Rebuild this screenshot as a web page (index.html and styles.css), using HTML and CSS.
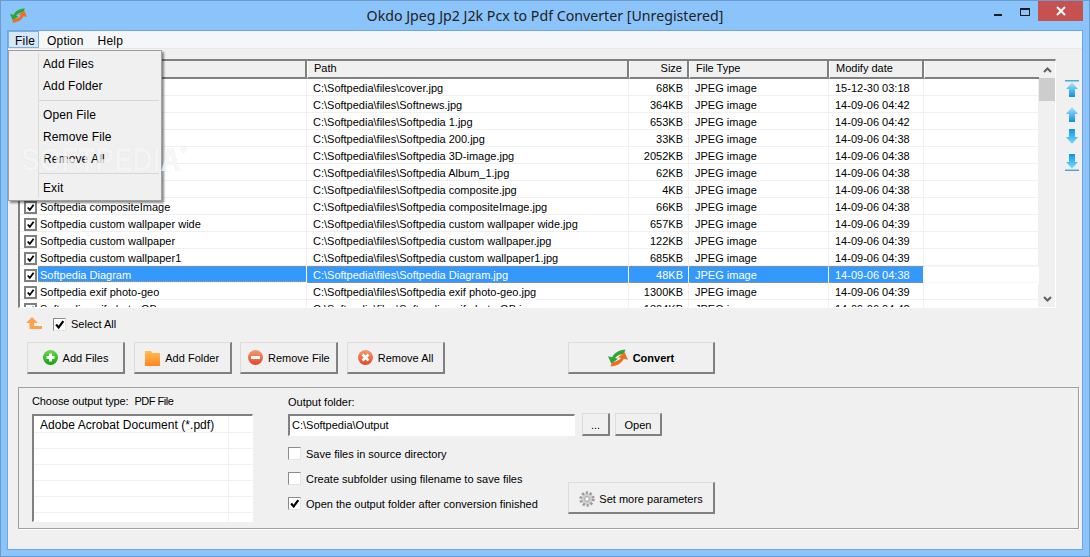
FILE: index.html
```html
<!DOCTYPE html>
<html lang="en">
<head>
    <meta charset="UTF-8">
    <title>Okdo Jpeg Jp2 J2k Pcx to Pdf Converter</title>
    <link rel="stylesheet" href="styles.css">
</head>
<body>
    <svg class="icon-defs" aria-hidden="true">
        <defs>
            <linearGradient id="blueUp" x1="0" y1="0" x2="0" y2="1">
                <stop offset="0" stop-color="#a5e6fb"/>
                <stop offset="1" stop-color="#0a8fe6"/>
            </linearGradient>
            <linearGradient id="blueDown" x1="0" y1="0" x2="0" y2="1">
                <stop offset="0" stop-color="#0a95e8"/>
                <stop offset="1" stop-color="#7adcfb"/>
            </linearGradient>
            <linearGradient id="greenBall" x1="0" y1="0" x2="0" y2="1">
                <stop offset="0" stop-color="#6fd84a"/>
                <stop offset="1" stop-color="#12a012"/>
            </linearGradient>
            <linearGradient id="redBall" x1="0" y1="0" x2="0" y2="1">
                <stop offset="0" stop-color="#f79a6c"/>
                <stop offset="1" stop-color="#e2472a"/>
            </linearGradient>
            <linearGradient id="folderFill" x1="0" y1="0" x2="0" y2="1">
                <stop offset="0" stop-color="#ffc04d"/>
                <stop offset="1" stop-color="#ff8426"/>
            </linearGradient>
        </defs>
        <symbol id="tick" viewBox="0 0 13 13">
            <path d="M2.5 6.5 L5.5 10 L11 2.5" fill="none" stroke="#000" stroke-width="2.6"/>
        </symbol>
        <symbol id="swap" viewBox="0 0 24 24">
            <path d="M21 2 C14 2 8 5 5 11 L0 10 L4 19 L12 13 L8.5 12 C11 9 15 7.5 19 7 Z" fill="#2aa836"/>
            <path d="M3 22 C10 22 16 19 19 13 L24 14 L20 5 L12 11 L15.5 12 C13 15 9 16.5 5 17 Z" fill="#ef6f22"/>
        </symbol>
        <symbol id="arrowTop" viewBox="0 0 16 17">
            <rect x="1" y="0" width="14" height="1.5" fill="#45a9dc"/>
            <path d="M8 2.5 L14 9 L11 9 L11 17 L5 17 L5 9 L2 9 Z" fill="url(#blueUp)"/>
        </symbol>
        <symbol id="arrowUp" viewBox="0 0 16 15">
            <path d="M8 0 L14 7 L11 7 L11 15 L5 15 L5 7 L2 7 Z" fill="url(#blueUp)"/>
        </symbol>
        <symbol id="arrowDown" viewBox="0 0 16 15">
            <path d="M5 0 L11 0 L11 8 L14 8 L8 15 L2 8 L5 8 Z" fill="url(#blueDown)"/>
        </symbol>
        <symbol id="arrowBottom" viewBox="0 0 16 17">
            <path d="M5 0 L11 0 L11 8 L14 8 L8 14.5 L2 8 L5 8 Z" fill="url(#blueDown)"/>
            <rect x="1" y="15.5" width="14" height="1.5" fill="#45a9dc"/>
        </symbol>
    </svg>

    <div class="window">
        <div class="titlebar">
            <div class="app-icon"><svg width="17" height="17"><use href="#swap"/></svg></div>
            <div class="title">Okdo Jpeg Jp2 J2k Pcx to Pdf Converter [Unregistered]</div>
            <div class="window-buttons">
                <span class="btn-min"></span>
                <span class="btn-max"></span>
                <span class="btn-close">
                    <svg width="10" height="10" viewBox="0 0 10 10"><path d="M1 1 L9 9 M9 1 L1 9" stroke="#fff" stroke-width="2"/></svg>
                </span>
            </div>
        </div>

        <div class="client">
            <div class="menubar">
                <span class="menu-title active">File</span>
                <span class="menu-title">Option</span>
                <span class="menu-title">Help</span>
            </div>

            <div class="list-row">
                <div class="file-list">
                    <div class="file-table-wrap">
                        <table class="file-table">
                            <colgroup>
                                <col class="col-name">
                                <col class="col-path">
                                <col class="col-size">
                                <col class="col-type">
                                <col class="col-date">
                                <col>
                            </colgroup>
                            <thead>
                                <tr>
                                    <th>Name</th>
                                    <th>Path</th>
                                    <th class="right">Size</th>
                                    <th>File Type</th>
                                    <th>Modify date</th>
                                    <th></th>
                                </tr>
                            </thead>
                            <tbody>
                                <tr>
                                    <td class="name-cell"><div class="name-wrap"><span class="list-check"><svg width="9" height="9"><use href="#tick"/></svg></span><span class="name">cover</span></div></td>
                                    <td>C:\Softpedia\files\cover.jpg</td><td class="right">68KB</td><td>JPEG image</td><td>15-12-30 03:18</td><td></td>
                                </tr>
                                <tr>
                                    <td class="name-cell"><div class="name-wrap"><span class="list-check"><svg width="9" height="9"><use href="#tick"/></svg></span><span class="name">Softnews</span></div></td>
                                    <td>C:\Softpedia\files\Softnews.jpg</td><td class="right">364KB</td><td>JPEG image</td><td>14-09-06 04:42</td><td></td>
                                </tr>
                                <tr>
                                    <td class="name-cell"><div class="name-wrap"><span class="list-check"><svg width="9" height="9"><use href="#tick"/></svg></span><span class="name">Softpedia 1</span></div></td>
                                    <td>C:\Softpedia\files\Softpedia 1.jpg</td><td class="right">653KB</td><td>JPEG image</td><td>14-09-06 04:42</td><td></td>
                                </tr>
                                <tr>
                                    <td class="name-cell"><div class="name-wrap"><span class="list-check"><svg width="9" height="9"><use href="#tick"/></svg></span><span class="name">Softpedia 200</span></div></td>
                                    <td>C:\Softpedia\files\Softpedia 200.jpg</td><td class="right">33KB</td><td>JPEG image</td><td>14-09-06 04:38</td><td></td>
                                </tr>
                                <tr>
                                    <td class="name-cell"><div class="name-wrap"><span class="list-check"><svg width="9" height="9"><use href="#tick"/></svg></span><span class="name">Softpedia 3D-image</span></div></td>
                                    <td>C:\Softpedia\files\Softpedia 3D-image.jpg</td><td class="right">2052KB</td><td>JPEG image</td><td>14-09-06 04:38</td><td></td>
                                </tr>
                                <tr>
                                    <td class="name-cell"><div class="name-wrap"><span class="list-check"><svg width="9" height="9"><use href="#tick"/></svg></span><span class="name">Softpedia Album_1</span></div></td>
                                    <td>C:\Softpedia\files\Softpedia Album_1.jpg</td><td class="right">62KB</td><td>JPEG image</td><td>14-09-06 04:38</td><td></td>
                                </tr>
                                <tr>
                                    <td class="name-cell"><div class="name-wrap"><span class="list-check"><svg width="9" height="9"><use href="#tick"/></svg></span><span class="name">Softpedia composite</span></div></td>
                                    <td>C:\Softpedia\files\Softpedia composite.jpg</td><td class="right">4KB</td><td>JPEG image</td><td>14-09-06 04:38</td><td></td>
                                </tr>
                                <tr>
                                    <td class="name-cell"><div class="name-wrap"><span class="list-check"><svg width="9" height="9"><use href="#tick"/></svg></span><span class="name">Softpedia compositeImage</span></div></td>
                                    <td>C:\Softpedia\files\Softpedia compositeImage.jpg</td><td class="right">66KB</td><td>JPEG image</td><td>14-09-06 04:38</td><td></td>
                                </tr>
                                <tr>
                                    <td class="name-cell"><div class="name-wrap"><span class="list-check"><svg width="9" height="9"><use href="#tick"/></svg></span><span class="name">Softpedia custom wallpaper wide</span></div></td>
                                    <td>C:\Softpedia\files\Softpedia custom wallpaper wide.jpg</td><td class="right">657KB</td><td>JPEG image</td><td>14-09-06 04:39</td><td></td>
                                </tr>
                                <tr>
                                    <td class="name-cell"><div class="name-wrap"><span class="list-check"><svg width="9" height="9"><use href="#tick"/></svg></span><span class="name">Softpedia custom wallpaper</span></div></td>
                                    <td>C:\Softpedia\files\Softpedia custom wallpaper.jpg</td><td class="right">122KB</td><td>JPEG image</td><td>14-09-06 04:39</td><td></td>
                                </tr>
                                <tr>
                                    <td class="name-cell"><div class="name-wrap"><span class="list-check"><svg width="9" height="9"><use href="#tick"/></svg></span><span class="name">Softpedia custom wallpaper1</span></div></td>
                                    <td>C:\Softpedia\files\Softpedia custom wallpaper1.jpg</td><td class="right">685KB</td><td>JPEG image</td><td>14-09-06 04:39</td><td></td>
                                </tr>
                                <tr class="selected">
                                    <td class="name-cell"><div class="name-wrap"><span class="list-check"><svg width="9" height="9"><use href="#tick"/></svg></span><span class="name">Softpedia Diagram</span></div></td>
                                    <td>C:\Softpedia\files\Softpedia Diagram.jpg</td><td class="right">48KB</td><td>JPEG image</td><td>14-09-06 04:38</td><td class="plain"></td>
                                </tr>
                                <tr>
                                    <td class="name-cell"><div class="name-wrap"><span class="list-check"><svg width="9" height="9"><use href="#tick"/></svg></span><span class="name">Softpedia exif photo-geo</span></div></td>
                                    <td>C:\Softpedia\files\Softpedia exif photo-geo.jpg</td><td class="right">1300KB</td><td>JPEG image</td><td>14-09-06 04:39</td><td></td>
                                </tr>
                                <tr>
                                    <td class="name-cell"><div class="name-wrap"><span class="list-check"><svg width="9" height="9"><use href="#tick"/></svg></span><span class="name">Softpedia exif photo-GB</span></div></td>
                                    <td>C:\Softpedia\files\Softpedia exif photo-GB.jpg</td><td class="right">1304KB</td><td>JPEG image</td><td>14-09-06 04:42</td><td></td>
                                </tr>
                            </tbody>
                        </table>
                    </div>
                    <div class="scrollbar">
                        <svg class="scroll-arrow" width="9" height="6" viewBox="0 0 9 6"><path d="M1 5 L4.5 1.5 L8 5" fill="none" stroke="#606060" stroke-width="2"/></svg>
                        <div class="scroll-thumb"></div>
                        <svg class="scroll-arrow" width="9" height="6" viewBox="0 0 9 6"><path d="M1 1 L4.5 4.5 L8 1" fill="none" stroke="#606060" stroke-width="2"/></svg>
                    </div>
                </div>
                <div class="move-buttons">
                    <svg width="16" height="17"><use href="#arrowTop"/></svg>
                    <div class="move-pair">
                        <svg width="16" height="15"><use href="#arrowUp"/></svg>
                        <svg width="16" height="15"><use href="#arrowDown"/></svg>
                    </div>
                    <svg width="16" height="17"><use href="#arrowBottom"/></svg>
                </div>
            </div>

            <div class="select-row">
                <svg class="parent-arrow" width="16" height="12" viewBox="0 0 16 12"><path d="M6 0 L12 6 L8 6 L8 9 L16 9 L16 12 L3.5 12 L3.5 6 L0 6 Z" fill="#ffa04a"/></svg>
                <span class="check checked"><svg width="11" height="11"><use href="#tick"/></svg></span>
                <span>Select All</span>
            </div>

            <div class="button-row">
                <button class="btn">
                    <svg width="15" height="15" viewBox="0 0 15 15"><circle cx="7.5" cy="7.5" r="7.5" fill="url(#greenBall)"/><path d="M7.5 3.5 V11.5 M3.5 7.5 H11.5" stroke="#fff" stroke-width="3"/></svg>
                    Add Files
                </button>
                <button class="btn">
                    <svg width="15" height="16" viewBox="0 0 15 16"><path d="M0 1 H6 L7.5 3 H15 V16 H0 Z" fill="url(#folderFill)"/></svg>
                    Add Folder
                </button>
                <button class="btn">
                    <svg width="15" height="15" viewBox="0 0 15 15"><circle cx="7.5" cy="7.5" r="7.5" fill="url(#redBall)"/><path d="M3 7.5 H12" stroke="#fff" stroke-width="3"/></svg>
                    Remove File
                </button>
                <button class="btn">
                    <svg width="15" height="15" viewBox="0 0 15 15"><circle cx="7.5" cy="7.5" r="7.5" fill="url(#redBall)"/><path d="M4.5 4.5 L10.5 10.5 M10.5 4.5 L4.5 10.5" stroke="#fff" stroke-width="2.6"/></svg>
                    Remove All
                </button>
                <button class="btn btn-convert">
                    <svg width="20" height="20"><use href="#swap"/></svg>
                    Convert
                </button>
            </div>

            <div class="output-group">
                <div class="type-col">
                    <div class="type-label">Choose output type:&nbsp; <span class="type-name">PDF File</span></div>
                    <div class="type-list">
                        <table class="type-table">
                            <tr><td>Adobe Acrobat Document (*.pdf)</td><td></td></tr>
                            <tr><td></td><td></td></tr>
                            <tr><td></td><td></td></tr>
                            <tr><td></td><td></td></tr>
                            <tr><td></td><td></td></tr>
                            <tr><td></td><td></td></tr>
                            <tr><td></td><td></td></tr>
                        </table>
                    </div>
                </div>
                <div class="folder-col">
                    <label class="folder-label" for="outputFolder">Output folder:</label>
                    <div class="folder-row">
                        <input type="text" id="outputFolder" value="C:\Softpedia\Output">
                        <button class="btn btn-browse">...</button>
                        <button class="btn btn-open">Open</button>
                    </div>
                    <div class="options-row">
                        <div class="options">
                            <div class="option"><span class="check"></span>Save files in source directory</div>
                            <div class="option"><span class="check"></span>Create subfolder using filename to save files</div>
                            <div class="option"><span class="check checked"><svg width="11" height="11"><use href="#tick"/></svg></span>Open the output folder after conversion finished</div>
                        </div>
                        <button class="btn btn-more">
                            <svg width="16" height="16" viewBox="0 0 16 16"><circle cx="8" cy="8" r="6.2" fill="#d4d4d4" stroke="#9a9a9a" stroke-width="3" stroke-dasharray="2 1.9"/><circle cx="8" cy="8" r="5" fill="#cfcfcf"/><circle cx="8" cy="8" r="2.4" fill="#f4f4f4" stroke="#a4a4a4"/></svg>
                            Set more parameters
                        </button>
                    </div>
                </div>
            </div>
        </div>
    </div>

    <!-- open File menu, lies over the list -->
    <div class="dropdown">
        <div class="drop-item">Add Files</div>
        <div class="drop-item">Add Folder</div>
        <div class="drop-sep"></div>
        <div class="drop-item">Open File</div>
        <div class="drop-item">Remove File</div>
        <div class="drop-item">Remove All</div>
        <div class="drop-sep"></div>
        <div class="drop-item">Exit</div>
    </div>

    <div class="watermark">SOFTPEDIA<sup>®</sup></div>
</body>
</html>
```

FILE: styles.css
```css
* {
    box-sizing: border-box;
}

body {
    margin: 0;
    width: 1090px;
    height: 557px;
    overflow: hidden;
    position: relative;
    font-family: "Liberation Sans", Arial, sans-serif;
    font-size: 11px;
    color: #000;
}

.icon-defs {
    display: block;
    width: 0;
    height: 0;
}

.window {
    width: 1090px;
    height: 557px;
    display: flex;
    flex-direction: column;
    background-color: #8ac4fa;
    border: 1px solid #6c9ccb;
    padding: 0 6px 6px;
}

.titlebar {
    height: 29px;
    flex: none;
    display: grid;
    grid-template-columns: 1fr auto 1fr;
}

.app-icon {
    padding: 6px 0 0 3px;
}

.title {
    font-family: "Noto Sans", sans-serif;
    font-size: 14.2px;
    line-height: 30px;
    color: #222;
}

.window-buttons {
    display: flex;
    justify-content: flex-end;
    height: 21px;
}

.btn-min {
    width: 8px;
    height: 2px;
    background-color: #1c1c1c;
    margin: 13px 18px 0 0;
}

.btn-max {
    width: 10px;
    height: 8px;
    border: 1px solid #1c1c1c;
    border-top-width: 2px;
    margin: 7px 8px 0 0;
}

.btn-close {
    width: 45px;
    height: 20px;
    background-color: #c75050;
    display: flex;
    align-items: center;
    justify-content: center;
}

.client {
    flex: 1;
    display: flex;
    flex-direction: column;
    background-color: #f0f0f0;
    border: 1px solid #6fa6dd;
}

.menubar {
    height: 18px;
    flex: none;
    display: flex;
    background-color: #f5f6f7;
    font-size: 12px;
    letter-spacing: 0.2px;
    border-bottom: 1px solid #e8e8e8;
}

.menu-title {
    padding: 3px 7px 0;
    line-height: 14px;
}

.menu-title.active {
    background-color: #d5e7f8;
    border: 1px solid #7ab0e0;
    padding: 2px 5px 0 6px;
    width: 31px;
    margin-right: 1px;
}

.list-row {
    display: flex;
    padding: 10px 0 0 10px;
    height: 259px;
    flex: none;
}

.file-list {
    width: 1038px;
    height: 249px;
    display: flex;
    background-color: #fff;
    border-top: 2px solid #808080;
    border-left: 2px solid #808080;
    border-right: 1px solid #fff;
    border-bottom: 1px solid #fff;
}

.file-table-wrap {
    flex: 1;
    overflow: hidden;
}

.file-table {
    table-layout: fixed;
    width: 1019px;
    border-collapse: separate;
    border-spacing: 0;
}

.col-name {
    width: 287px;
}

.col-path {
    width: 322px;
}

.col-size {
    width: 60px;
}

.col-type {
    width: 140px;
}

.col-date {
    width: 95px;
}

.file-table th {
    height: 18px;
    padding: 0 6px 2px;
    text-align: left;
    font-weight: normal;
    background-color: #f0f0f0;
    border-bottom: 2px solid #808080;
    border-right: 2px solid #808080;
    border-left: 1px solid #fff;
}

.file-table th:last-child {
    border-right: none;
}

.file-table td {
    height: 17px;
    padding: 3px 6px 0;
    line-height: 13px;
    vertical-align: top;
    white-space: nowrap;
    overflow: hidden;
    border-bottom: 1px solid #f0f0f0;
    border-right: 1px solid #f0f0f0;
}

.file-table .right {
    text-align: right;
    padding-right: 5px;
}

.file-table td.name-cell {
    padding: 0;
}

.name-wrap {
    display: flex;
    align-items: flex-start;
    height: 16px;
    padding-left: 4px;
}

.list-check {
    width: 13px;
    height: 13px;
    flex: none;
    margin-top: 3px;
    border: 2px solid #808080;
    background-color: #fff;
    display: flex;
}

.name {
    flex: 1;
    height: 16px;
    padding: 3px 0 0 2px;
    margin-left: 1px;
    line-height: 13px;
}

.file-table tr.selected td {
    background-color: #3399ff;
    color: #fff;
    padding-top: 2px;
    border-right-color: #fff;
    border-top: 1px dotted #c98a4a;
    border-bottom: 1px dotted #c98a4a;
}

.file-table tr.selected td.name-cell {
    background-color: #fff;
    padding-top: 0;
    border-top: none;
    border-bottom-color: #f0f0f0;
}

.file-table tr.selected td.plain {
    background-color: #fff;
    border-top-color: #f0f0f0;
    border-bottom-color: #f0f0f0;
}

.selected .name {
    background-color: #3399ff;
    padding-top: 2px;
    border-top: 1px dotted #c98a4a;
    border-bottom: 1px dotted #c98a4a;
}

.scrollbar {
    width: 16px;
    flex: none;
    display: flex;
    flex-direction: column;
    align-items: center;
    background-color: #f0f0f0;
    padding: 6px 0 5px;
}

.scroll-thumb {
    width: 16px;
    height: 23px;
    background-color: #cdcdcd;
    margin-top: 5px;
    margin-bottom: auto;
}

.scroll-arrow {
    flex: none;
}

.move-buttons {
    display: flex;
    flex-direction: column;
    gap: 10px;
    padding: 21px 0 0 8px;
}

.move-pair {
    display: flex;
    flex-direction: column;
    gap: 7px;
}

.select-row {
    display: flex;
    align-items: center;
    height: 16px;
    margin-top: 8px;
    padding-left: 18px;
    flex: none;
}

.parent-arrow {
    margin-top: -2px;
}

.check {
    width: 13px;
    height: 13px;
    flex: none;
    display: inline-flex;
    background-color: #fff;
    border: 1px solid #8c8c8c;
    border-right-color: #e4e4e4;
    border-bottom-color: #e4e4e4;
}

.select-row .check {
    margin: 0 5px 0 11px;
}

.button-row {
    display: flex;
    flex: none;
    padding-left: 19px;
    margin-top: 10px;
}

.btn {
    height: 32px;
    display: flex;
    align-items: center;
    justify-content: center;
    gap: 5px;
    padding: 0;
    font-family: inherit;
    font-size: 11px;
    color: #000;
    background-color: #f0f0f0;
    border: 1px solid #dcdcdc;
    border-right: 2px solid #808080;
    border-bottom: 2px solid #808080;
}

.button-row .btn {
    width: 98px;
    margin-right: 8.7px;
}

.button-row .btn-convert {
    width: 147px;
    margin: 0 0 0 114.2px;
    font-weight: bold;
}

.output-group {
    display: flex;
    height: 142px;
    width: 1061px;
    flex: none;
    margin: 13px 0 0 10px;
    border: 1px solid #a0a0a0;
    box-shadow: 1px 1px 0 #fff;
    padding-left: 13px;
}

.type-col {
    width: 221px;
    padding-top: 6px;
}

.type-label {
    height: 14px;
    line-height: 14px;
    margin-bottom: 6px;
    letter-spacing: -0.1px;
}

.type-name {
    letter-spacing: -0.5px;
}

.type-list {
    height: 108px;
    overflow: hidden;
    background-color: #fff;
    border-top: 2px solid #808080;
    border-left: 2px solid #808080;
    border-right: 1px solid #fff;
    border-bottom: 1px solid #fff;
}

.type-table {
    table-layout: fixed;
    width: 218px;
    border-collapse: separate;
    border-spacing: 0;
}

.type-table td {
    height: 16px;
    padding: 2px 0 0 6px;
    line-height: 13px;
    vertical-align: top;
    font-size: 12px;
    letter-spacing: 0.05px;
    white-space: nowrap;
    border-bottom: 1px solid #f0f0f0;
}

.type-table tr:first-child td {
    height: 17px;
    padding-top: 3px;
}

.type-table td:first-child {
    width: 195px;
    border-right: 1px solid #f0f0f0;
}

.folder-col {
    margin-left: 35px;
    padding-top: 7px;
    flex: 1;
}

.folder-label {
    display: block;
    height: 14px;
    line-height: 14px;
}

.folder-row {
    display: flex;
    align-items: center;
    margin-top: 4px;
}

.folder-row input {
    width: 287px;
    height: 22px;
    padding: 0 2px;
    font-family: inherit;
    font-size: 11px;
    background-color: #fff;
    border: 1px solid #fff;
    border-top: 2px solid #808080;
    border-left: 2px solid #808080;
    margin-right: 7px;
}

.btn-browse {
    width: 28px;
    height: 23px;
    padding-top: 1px;
    margin-right: 5px;
}

.btn-open {
    width: 47px;
    height: 23px;
    padding-top: 1px;
}

.options-row {
    display: flex;
    align-items: flex-start;
}

.options {
    width: 280px;
    padding-top: 5px;
}

.option {
    height: 25px;
    display: flex;
    align-items: center;
}

.option .check {
    margin-right: 5px;
}

.btn-more {
    width: 147px;
    gap: 4px;
    padding-top: 2px;
    margin-top: 46px;
}

.dropdown {
    position: absolute;
    left: 8px;
    top: 50px;
    width: 154px;
    height: 151px;
    padding: 2px 0 0 30px;
    font-size: 12px;
    background-color: #f0f0f0;
    border: 1px solid #a0a0a0;
    box-shadow: 2px 2px 2px rgba(0, 0, 0, 0.45);
}

.dropdown::before {
    content: "";
    position: absolute;
    left: 29px;
    top: 2px;
    bottom: 2px;
    width: 1px;
    background-color: #dcdcdc;
}

.drop-item {
    height: 22px;
    line-height: 22px;
    padding-left: 4px;
    letter-spacing: 0.1px;
}

.drop-sep {
    height: 1px;
    background-color: #d6d6d6;
    margin: 3px 2px 3px 0;
}

/* site watermark, narrower than the bold face */
.watermark {
    position: absolute;
    left: 21px;
    top: 140px;
    font-size: 34px;
    font-weight: bold;
    color: rgba(255, 255, 255, 0.75);
    text-shadow: 0 0 1px rgba(0, 0, 0, 0.12);
    pointer-events: none;
    transform: scaleX(0.82);
    transform-origin: left top;
}

.watermark sup {
    font-size: 10px;
    vertical-align: 18px;
    line-height: 0;
}
```
